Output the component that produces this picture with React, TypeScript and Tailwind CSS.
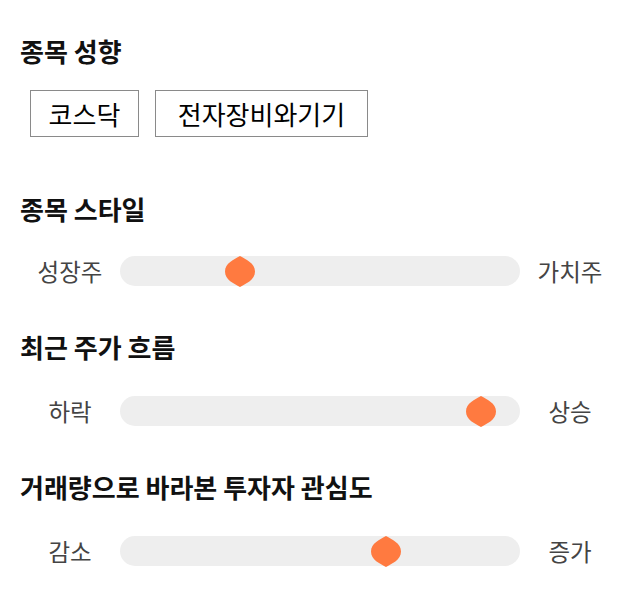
import React from 'react';

type Slider = {
  title: string;
  left: string;
  right: string;
  thumbX: number; // thumb centre, px from track start
};

const sliders: Slider[] = [
  { title: '종목 스타일', left: '성장주', right: '가치주', thumbX: 120 },
  { title: '최근 주가 흐름', left: '하락', right: '상승', thumbX: 361 },
  { title: '거래량으로 바라본 투자자 관심도', left: '감소', right: '증가', thumbX: 266 },
];

const font = { fontFamily: '"Noto Sans CJK KR", "Noto Sans", sans-serif' };

function Thumb({ x }: { x: number }) {
  return (
    <svg
      width="30"
      height="31"
      viewBox="0 0 30 31"
      className="absolute top-[-0.5px]"
      style={{ left: x - 15 }}
    >
      <path
        d="M15 0 C21 3.5 30 7 30 15.5 C30 24 21 27.5 15 31 C9 27.5 0 24 0 15.5 C0 7 9 3.5 15 0 Z"
        fill="#ff7a40"
      />
    </svg>
  );
}

export default function App(): React.ReactElement {
  return (
    <div className="w-[640px] min-h-[606px] bg-white px-5 pt-[34px]" style={font}>
      {/* 종목 성향 */}
      <h2 className="text-[26px] leading-[34px] font-bold text-[#111]">종목 성향</h2>
      <div className="flex gap-4 ml-[10px] mt-[22px]">
        <div className="w-[109px] h-[47px] border border-[#8a8a8a] flex items-center justify-center text-[26px] text-black">
          코스닥
        </div>
        <div className="w-[213px] h-[47px] border border-[#8a8a8a] flex items-center justify-center text-[26px] text-black">
          전자장비와기기
        </div>
      </div>

      {sliders.map((s, i) => (
        <section key={s.title} className={i === 0 ? 'mt-[55px]' : 'mt-[44px]'}>
          <h2 className="text-[26px] leading-[34px] font-bold text-[#111]">{s.title}</h2>
          <div className={`flex items-center ${i === 0 ? 'mt-[30px]' : 'mt-[32px]'}`}>
            <div className="w-[100px] text-center text-[23.5px] leading-[30px] text-[#444]">{s.left}</div>
            <div className="relative w-[400px] h-[30px] rounded-full bg-[#eeeeee]">
              <Thumb x={s.thumbX} />
            </div>
            <div className="w-[100px] text-center text-[23.5px] leading-[30px] text-[#444]">{s.right}</div>
          </div>
        </section>
      ))}
    </div>
  );
}
